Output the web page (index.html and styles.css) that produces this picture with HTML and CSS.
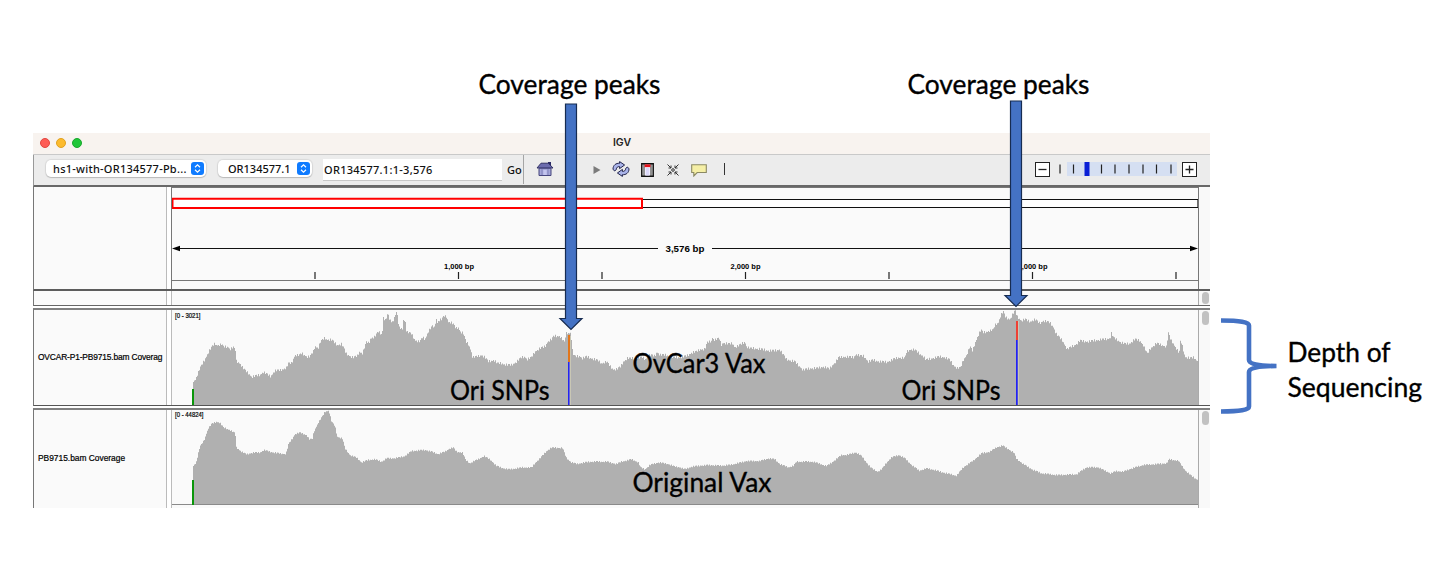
FILE: index.html
```html
<!DOCTYPE html>
<html lang="en">
<head>
    <meta charset="UTF-8">
    <meta name="viewport" content="width=device-width, initial-scale=1.0">
    <title>IGV</title>
    <link rel="stylesheet" href="styles.css">
</head>
<body>
  <div class="window">
    <header class="titlebar">
      <span class="light red"></span>
      <span class="light yellow"></span>
      <span class="light green"></span>
      <h1>IGV</h1>
    </header>

    <div class="toolbar">
      <div class="locus">
        <div class="select genome"><span>hs1-with-OR134577-Pb...</span>
          <svg class="arrows" viewBox="0 0 13 13"><path d="M4 5.2 6.5 2.9 9 5.2M4 7.8l2.5 2.3L9 7.8"/></svg>
        </div>
        <div class="select chrom"><span>OR134577.1</span>
          <svg class="arrows" viewBox="0 0 13 13"><path d="M4 5.2 6.5 2.9 9 5.2M4 7.8l2.5 2.3L9 7.8"/></svg>
        </div>
        <div class="search">OR134577.1:1-3,576</div>
        <div class="go">Go</div>
      </div>
      <svg class="icon home" width="18" height="16" viewBox="0 0 18 16">
        <path d="M12 1h3v4h-3z" fill="#2a2a66"/>
        <path d="M5 2.2h7.5L17 7H1z" fill="#6c6cae" stroke="#29295c" stroke-width=".9"/>
        <path d="M3 7.3h12v7.2H3z" fill="#a5a7d8" stroke="#45457d"/>
        <path d="M6 8v6M12 8v6" stroke="#8183bb"/>
        <path d="M7.3 9h3.4v5H7.3z" fill="#c3c5ee"/>
      </svg>
      <svg class="icon play" width="8" height="8" viewBox="0 0 8 8"><path d="M.5 0 7.5 4 .5 8z" fill="#7b7b7b"/></svg>
      <svg class="icon refresh" width="18" height="16" viewBox="0 0 18 16">
        <g fill="#aab4ea" stroke="#22244c" stroke-width="1">
          <path d="M1 8.2C1 4.2 4 2 7.6 2.3V.6l5 3.4-5 3.6V5.6C5.6 5.4 4.4 6.5 4.3 8.6L2.6 10z"/>
          <path d="M17 7.8C17 11.8 14 14 10.4 13.7v1.7l-5-3.4 5-3.6v2c2 .2 3.2-.9 3.3-3L15.4 6z"/>
        </g>
      </svg>
      <svg class="icon region" width="13" height="14" viewBox="0 0 13 14">
        <path d="M.8.8h11.4v12.4H.8z" fill="#fff" stroke="#111" stroke-width="1.5"/>
        <path d="M3 1v12M10 1v12" stroke="#222"/>
        <path d="M3.6 1.4h5.9v2.8H3.6z" fill="#e8121c"/>
        <path d="M4.5 4.5h4v8h-4z" fill="#dcd9fa"/>
      </svg>
      <svg class="icon collapse" width="12" height="12" viewBox="0 0 12 12">
        <path d="M.5.5 4 4M11.5.5 8 4M.5 11.5 4 8M11.5 11.5 8 8M1.5 4H4V1.5M10.5 4H8V1.5M1.5 8H4v2.5M10.5 8H8v2.5" stroke="#333" fill="none"/>
        <circle cx="6" cy="6" r="1.3" fill="none" stroke="#333"/>
      </svg>
      <svg class="icon balloon" width="16" height="13" viewBox="0 0 16 13">
        <path d="M.7.8h14.6v7.7H6.2L2.8 12V8.5H.7z" fill="#f5efa6" stroke="#8b8964" stroke-width="1.1"/>
      </svg>
      <span class="bar"></span>

      <div class="zoom">
        <span class="zoom-btn"><svg width="15" height="15" viewBox="0 0 15 15"><path d="M3.5 7.5h8"/></svg></span>
        <svg class="slider" width="118" height="14" viewBox="0 0 118 14">
          <path d="M8 0h110v14H8z" fill="#d5dff2"/>
          <path d="M1 2.5v9M14.5 2.5v9M42.5 2.5v9M56 2.5v9M70 2.5v9M84 2.5v9M97.5 2.5v9M112 2.5v9" stroke="#222" stroke-width="1.2"/>
          <path d="M25.5 0h5v14h-5z" fill="#0a1fd6"/>
        </svg>
        <span class="zoom-btn"><svg width="15" height="15" viewBox="0 0 15 15"><path d="M3.5 7.5h8M7.5 3.5v8"/></svg></span>
      </div>
    </div>

    <div class="row header-row">
      <div class="name"></div>
      <div class="data">
        <svg width="1026" height="102" viewBox="172 187 1026 102">
          <path d="M172 187.5h1026M172 280.5h1026" stroke="#777"/>
          <path d="M643 199.5h555v8H643" fill="#fff" stroke="#111" stroke-width="1.2"/>
          <path d="M172.5 198.8H642v9.2H172.5z" fill="#fff" stroke="#f00" stroke-width="2"/>
          <path d="M174 248.5h484M712 248.5h484" stroke="#111" stroke-width="1.2"/>
          <path d="M172 248.5l8-2.8v5.6zM1198 248.5l-8-2.8v5.6z"/>
          <path d="M315 272v7M458.5 272v7M602 272v7M745.5 272v7M889 272v7M1032.5 272v7M1176 272v7" stroke="#222" stroke-width="1.2"/>
          <text class="span" x="665.5" y="252" textLength="39" lengthAdjust="spacingAndGlyphs">3,576 bp</text>
          <text class="tick" x="444" y="269" textLength="30" lengthAdjust="spacingAndGlyphs">1,000 bp</text>
          <text class="tick" x="730.5" y="269" textLength="30" lengthAdjust="spacingAndGlyphs">2,000 bp</text>
          <text class="tick" x="1017.5" y="269" textLength="30" lengthAdjust="spacingAndGlyphs">3,000 bp</text>
        </svg>
      </div>
      <div class="scroll"></div>
    </div>

    <div class="row feature-row">
      <div class="name"></div>
      <div class="data"></div>
      <div class="scroll"><span class="thumb"></span></div>
    </div>

    <div class="row track-row">
      <div class="name"><span class="long">OVCAR-P1-PB9715.bam Coverag</span></div>
      <div class="data">
        <svg width="1026" height="95" viewBox="172 310 1026 95">
          <path class="coverage" id="ovcar"/>
          <path d="M192 389h2v16h-2z" fill="#0a960a"/>
          <path d="M570.5 336v69M1018.5 321v84" stroke="#c9c7b4"/>
          <path d="M568 335h2v27h-2z" fill="#e2761b"/>
          <path d="M1016 321h2v19h-2z" fill="#ee4035"/>
          <path d="M568 362h1.5v43H568zM1016 340h1.7v65H1016z" fill="#2323f5"/>
          <text class="range" x="175" y="317.5" textLength="25.5" lengthAdjust="spacingAndGlyphs">[0 - 3021]</text>
        </svg>
      </div>
      <div class="scroll"><span class="thumb"></span></div>
    </div>

    <div class="row track-row last">
      <div class="name"><span>PB9715.bam Coverage</span></div>
      <div class="data">
        <svg width="1026" height="98" viewBox="172 410 1026 98">
          <path class="coverage" id="original"/>
          <path d="M172 504.5h1026" stroke="#8a8a8a"/>
          <path d="M192 480h2v25h-2z" fill="#0a960a"/>
          <text class="range" x="175" y="417" textLength="28.5" lengthAdjust="spacingAndGlyphs">[0 - 44824]</text>
        </svg>
      </div>
      <div class="scroll"><span class="thumb"></span></div>
    </div>
  </div>

  <!-- arrows, brace and captions on top of the window -->
  <svg class="notes" width="1456" height="576" viewBox="0 0 1456 576">
    <g class="arrow">
      <path d="M565.5 104h11v214.5h5.5L571 329.5 560 318.5h5.5z"/>
      <path d="M1010.5 101h11v194.5h5.5L1016 306.5 1005 295.5h5.5z"/>
    </g>
    <path class="brace" d="M1221 320.5C1240 320.5 1249 322 1249 325.5V360C1249 364 1258 366 1276.5 366C1258 366 1249 368 1249 372V406.5C1249 410 1240 411.5 1221 411.5"/>
    <g class="captions">
      <text x="478.5" y="94" textLength="182" lengthAdjust="spacingAndGlyphs">Coverage peaks</text>
      <text x="907.5" y="94" textLength="182" lengthAdjust="spacingAndGlyphs">Coverage peaks</text>
      <text x="450" y="400" textLength="99.5" lengthAdjust="spacingAndGlyphs">Ori SNPs</text>
      <text x="901.5" y="400" textLength="99" lengthAdjust="spacingAndGlyphs">Ori SNPs</text>
      <text x="632.5" y="372.5" textLength="133" lengthAdjust="spacingAndGlyphs">OvCar3 Vax</text>
      <text x="632.5" y="492" textLength="139" lengthAdjust="spacingAndGlyphs">Original Vax</text>
      <text x="1287.5" y="361.5" textLength="103" lengthAdjust="spacingAndGlyphs">Depth of</text>
      <text x="1287.5" y="396.5" textLength="134.5" lengthAdjust="spacingAndGlyphs">Sequencing</text>
    </g>
  </svg>
  <script src="coverage.js"></script>
</body>
</html>
```
FILE: styles.css
```css
* {margin: 0; box-sizing: border-box;}
body {position: relative; width: 1456px; height: 576px; overflow: hidden; background: #fff; font-family: "Liberation Sans", Arial, sans-serif;}
svg {display: block;}

.window {width: 1177px; padding-top: 133px; margin-left: 33px;}

.titlebar {
    display: flex;
    align-items: center;
    gap: 6px;
    height: 22px;
    padding: 0 0 2px 7px;
    background: #f8f3ef;
    border-bottom: 1px solid #c9c9c9;
}
.titlebar h1 {flex: 1; margin-left: -54px; text-align: center; font: 600 10.5px Inter, sans-serif; color: #222;}
.light {width: 10px; height: 10px; border-radius: 50%; border: 1px solid transparent;}
.red {background: #fe5d56; border-color: #e2463f;}
.yellow {background: #fcbb2e; border-color: #e1a11f;}
.green {background: #20c639; border-color: #19a82d;}

.toolbar {
    display: flex;
    align-items: center;
    height: 32px;
    padding-bottom: 1px;
    background: #ececec;
    border-bottom: 2px solid #686868;
    border-left: 1px solid #999;
    font: 500 11px "Noto Sans", sans-serif;
    color: #111;
}
.locus {display: flex; align-items: center; width: 490px; height: 29px; padding-left: 12px; border-right: 1px solid #a5a5a5;}
.select {
    display: flex;
    align-items: center;
    justify-content: space-between;
    height: 17px;
    margin-top: -2px;
    padding: 0 2px 0 7px;
    background: #fff;
    border-radius: 5px;
    box-shadow: 0 0 1px 1px rgba(0, 0, 0, 0.08), 0 1px 1px rgba(0, 0, 0, 0.15);
}
.genome {width: 160px; letter-spacing: 0.25px;}
.chrom {width: 94px; margin-left: 12px; padding-left: 10px;}
.arrows {width: 13px; height: 13px; border-radius: 3px; background: #0f7bff; fill: none; stroke: #fff; stroke-width: 1.2;}
.search {width: 179px; height: 22px; margin-left: 11px; padding-left: 1px; line-height: 21px; letter-spacing: 0.28px; background: #fff; border-bottom: 1px solid #c8c8c8;}
.go {margin-left: 5px; margin-top: -1px;}

.icon {flex: none;}
.home {margin-left: 12px; margin-top: -1px;}
.play {margin-left: 39px;}
.refresh {margin-left: 11px; margin-top: -1px;}
.region {margin-left: 11px;}
.collapse {margin-left: 13px;}
.balloon {margin-left: 12px; margin-top: 2px;}
.bar {width: 1px; height: 12px; margin-left: 17px; margin-top: -1px; background: #333;}
.zoom {display: flex; align-items: center; gap: 6px; margin: -1px 13px 0 auto;}
.zoom .slider {margin: 0 -1px 0 3px;}
.zoom-btn {width: 15px; height: 15px; background: #fff; border: 1.5px solid #222;}
.zoom-btn svg {margin: -1px; stroke: #222; stroke-width: 1.3;}

/* name column | gap | data column | scrollbar */
.row {display: grid; grid-template-columns: 133px 4px 1028px 11px; border-left: 1px solid #777;}
.name {display: flex; align-items: center; background: #fafafa; border-right: 1px solid #bbb;}
.name span {padding: 0 0 2px 4px; white-space: nowrap; font-size: 8.4px; color: #000; -webkit-text-stroke: 0.2px #000;}
.name .long {letter-spacing: -0.14px;}
.data {grid-column: 3; background: #fafafa; border-left: 1px solid #bbb; border-right: 1px solid #aaa;}
.scroll {background: #f9f9f9;}
.thumb {display: block; width: 7px; height: 14px; margin: 1px 0 0 3px; border-radius: 4px; background: #c1c1c1;}

.header-row {height: 104px; border-bottom: 2px solid #5c5c5c;}
.header-row .data {border-color: #777;}
.feature-row {height: 15px; border-bottom: 1px solid #666;}
.feature-row .thumb {height: 12px;}
.track-row {height: 98px; margin-top: 2px; border-top: 2px solid #808080; border-bottom: 1px solid #555;}
.last {height: 100px; border-bottom: none;}

.coverage {fill: #b0b0b0; stroke: none;}
.span {font-size: 9.5px; font-weight: bold;}
.tick {font-size: 7.5px; font-weight: bold;}
.range {font-size: 7px; stroke: #000; stroke-width: 0.2;}

.notes {position: absolute; top: 0; left: 0;}
.arrow {fill: #4472c4; stroke: #172c51; stroke-width: 1.2;}
.brace {fill: none; stroke: #4472c4; stroke-width: 4.6;}
.captions {font: 27px Lato, sans-serif; stroke: #000; stroke-width: 0.35;}
```
FILE: coverage.js
```js
// depth profiles, x and y in thirds of a pixel from (160, 300)
const ovcar = [
  99,243, 106,240, 120,205, 135,178, 148,152, 158,138, 165,130, 170,136, 185,133, 190,140, 205,140, 210,148, 220,142, 227,152, 228,182, 240,190,
  252,208, 268,222, 276,231, 285,228, 300,225, 310,216, 320,222, 332,229, 345,212, 360,211, 380,203, 385,190, 395,190, 405,165, 418,166, 425,160,
  442,170, 450,170, 460,155, 465,138, 475,144, 482,125, 495,113, 500,118, 515,120, 522,126, 532,135, 545,132, 552,145, 558,160, 570,168, 580,173,
  592,168, 598,155, 608,160, 612,148, 620,125, 627,130, 632,115, 645,110, 655,95, 665,102, 668,90, 670,50, 676,62, 684,42, 690,62, 700,64,
  706,42, 712,38, 716,80, 727,90, 730,60, 736,62, 740,95, 755,102, 765,120, 775,124, 780,125, 788,112, 795,118, 805,95, 812,85, 818,78,
  825,85, 828,50, 832,68, 838,60, 846,58, 852,48, 860,50, 865,65, 875,68, 882,75, 888,85, 895,82, 902,95, 910,100, 918,125, 925,132,
  933,150, 938,172, 950,170, 965,165, 975,172, 985,185, 1002,180, 1012,190, 1025,190, 1042,195, 1055,195, 1070,185, 1085,172, 1095,170,
  1102,178, 1115,172, 1125,155, 1140,145, 1155,140, 1163,125, 1175,118, 1182,108, 1200,108, 1207,118, 1214,128, 1218,100, 1234,98, 1235,135,
  1239,160, 1245,170, 1260,168, 1267,175, 1280,170, 1295,175, 1315,182, 1325,190, 1340,185, 1350,198, 1360,208, 1372,207, 1382,200, 1390,185,
  1402,175, 1420,175, 1448,172, 1455,178, 1470,165, 1485,168, 1491,155, 1500,165, 1520,165, 1535,172, 1560,172, 1580,168, 1595,158, 1610,155,
  1620,148, 1635,148, 1642,128, 1655,122, 1657,112, 1663,120, 1678,115, 1684,135, 1690,128, 1705,132, 1718,130, 1725,142, 1740,135, 1755,125,
  1760,140, 1770,145, 1785,145, 1805,148, 1828,152, 1845,152, 1860,148, 1867,160, 1880,178, 1905,185, 1915,195, 1930,210, 1950,205, 1970,205,
  1990,200, 2008,207, 2018,195, 2025,188, 2037,172, 2055,170, 2080,172, 2090,162, 2100,168, 2112,168, 2125,185, 2140,180, 2160,185, 2180,186,
  2195,180, 2215,172, 2235,175, 2240,155, 2252,148, 2265,150, 2280,162, 2290,168, 2298,180, 2315,175, 2340,170, 2355,172, 2370,180, 2380,195,
  2392,205, 2402,203, 2410,180, 2420,165, 2430,140, 2438,153, 2445,130, 2455,105, 2463,90, 2470,98, 2490,92, 2500,90, 2505,75, 2515,68,
  2523,45, 2530,35, 2537,52, 2550,58, 2560,40, 2566,32, 2572,50, 2585,62, 2595,58, 2610,65, 2625,58, 2640,70, 2650,62, 2670,68, 2680,80,
  2688,100, 2698,112, 2708,122, 2722,148, 2735,140, 2750,132, 2760,122, 2785,125, 2810,120, 2835,118, 2851,114, 2854,98, 2860,112, 2872,120,
  2885,128, 2895,132, 2910,130, 2925,118, 2940,122, 2950,135, 2962,162, 2972,145, 2990,130, 3005,135, 3020,140, 3025,98, 3032,118, 3040,130,
  3052,150, 3058,160, 3062,120, 3068,140, 3075,170, 3090,175, 3102,172, 3114,185
];
const original = [
  99,497, 108,490, 120,440, 132,422, 145,385, 155,372, 170,365, 180,368, 190,382, 210,390, 226,400, 229,442, 245,455, 260,463, 280,458, 300,458,
  312,450, 330,455, 355,460, 378,462, 386,432, 398,415, 405,402, 420,398, 440,405, 448,418, 457,418, 462,395, 475,368, 490,345, 495,335, 507,332,
  515,365, 525,378, 532,410, 547,415, 550,425, 555,445, 570,465, 590,473, 605,487, 625,480, 645,478, 665,485, 680,475, 700,475, 720,472, 735,468,
  755,453, 780,451, 795,450, 815,455, 835,462, 855,455, 870,445, 880,443, 890,455, 908,458, 917,480, 930,490, 945,482, 960,475, 972,468, 990,478,
  1010,498, 1030,505, 1048,508, 1070,505, 1090,502, 1115,503, 1125,490, 1140,475, 1160,453, 1175,443, 1208,444, 1220,475, 1235,487, 1250,492,
  1270,488, 1290,485, 1340,485, 1370,492, 1385,485, 1415,478, 1435,487, 1442,502, 1455,508, 1470,495, 1495,487, 1525,492, 1545,500, 1560,502,
  1575,508, 1595,500, 1620,497, 1650,495, 1680,497, 1710,495, 1740,488, 1760,483, 1800,483, 1825,475, 1845,478, 1860,492, 1885,502, 1900,498,
  1910,485, 1960,485, 1985,493, 2000,498, 2015,488, 2045,465, 2060,465, 2088,457, 2105,468, 2120,488, 2135,505, 2153,515, 2165,508, 2180,488,
  2195,472, 2218,465, 2235,475, 2255,495, 2278,512, 2300,505, 2325,510, 2340,515, 2360,520, 2390,527, 2410,502, 2440,482, 2465,460, 2490,455,
  2510,442, 2528,437, 2545,447, 2562,458, 2570,477, 2590,492, 2620,510, 2645,520, 2690,525, 2750,523, 2765,512, 2780,502, 2815,502, 2835,512,
  2852,520, 2870,513, 2890,515, 2910,507, 2950,495, 3020,490, 3028,478, 3055,482, 3075,510, 3095,528, 3114,540
];

// one bar per pixel column, with a little roughness on top
function drawCoverage(id, points, base, rough) {
  let d = 'M193 ' + base;
  let i = 0;
  for (let x = 193; x < 1198; x++) {
    const px = (x - 160) * 3 + 1.5;
    while (i + 4 < points.length && points[i + 2] < px) i += 2;
    const t = Math.min(1, Math.max(0, (px - points[i]) / (points[i + 2] - points[i])));
    const noise = ((x * 7919 + x * x * 31) % 11 / 10 - 0.5) * rough;
    const y = 300 + (points[i + 1] + (points[i + 3] - points[i + 1]) * t) / 3 + noise;
    d += 'V' + y.toFixed(1) + 'H' + (x + 1);
  }
  document.getElementById(id).setAttribute('d', d + 'V' + base + 'z');
}

drawCoverage('ovcar', ovcar, 405, 2.4);
drawCoverage('original', original, 504, 1.3);
```
